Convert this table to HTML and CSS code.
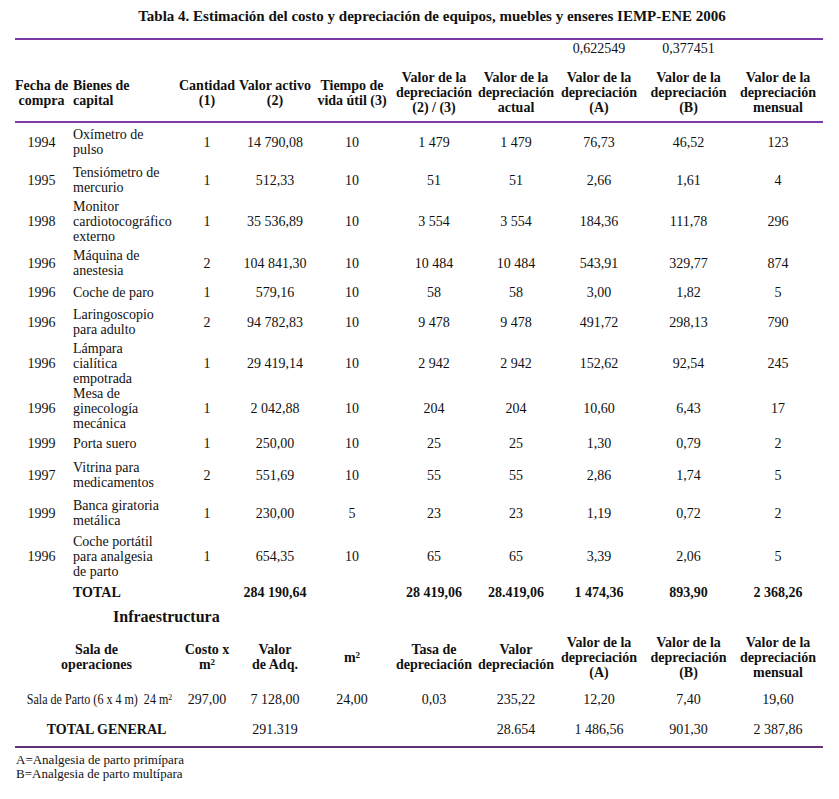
FILE: index.html
```html
<!DOCTYPE html>
<html lang="es">
<head>
<meta charset="utf-8">
<title>Tabla 4</title>
<link rel="stylesheet" href="styles.css">
</head>
<body>
<div class="page">
  <h1 class="title">Tabla 4. Estimación del costo y depreciación de equipos, muebles y enseres IEMP-ENE 2006</h1>
  <table class="tbl">
    <colgroup>
      <col class="c1"><col class="c2"><col class="c3"><col class="c4"><col class="c5">
      <col class="c6"><col class="c7"><col class="c8"><col class="c9"><col class="c10">
    </colgroup>
    <thead>
      <tr class="coef">
        <td colspan="7"></td><td>0,622549</td><td>0,377451</td><td></td>
      </tr>
      <tr class="head">
        <th>Fecha de<br>compra</th>
        <th class="left">Bienes de<br>capital</th>
        <th>Cantidad<br>(1)</th>
        <th>Valor activo<br>(2)</th>
        <th>Tiempo de<br>vida útil (3)</th>
        <th>Valor de la<br>depreciación<br>(2) / (3)</th>
        <th>Valor de la<br>depreciación<br>actual</th>
        <th>Valor de la<br>depreciación<br>(A)</th>
        <th>Valor de la<br>depreciación<br>(B)</th>
        <th>Valor de la<br>depreciación<br>mensual</th>
      </tr>
    </thead>
    <tbody class="body">
      <tr class="r2"><td>1994</td><td class="left">Oxímetro de<br>pulso</td><td>1</td><td>14 790,08</td><td>10</td><td>1 479</td><td>1 479</td><td>76,73</td><td>46,52</td><td>123</td></tr>
      <tr class="r2"><td>1995</td><td class="left">Tensiómetro de<br>mercurio</td><td>1</td><td>512,33</td><td>10</td><td>51</td><td>51</td><td>2,66</td><td>1,61</td><td>4</td></tr>
      <tr class="r3"><td>1998</td><td class="left">Monitor<br>cardiotocográfico<br>externo</td><td>1</td><td>35 536,89</td><td>10</td><td>3 554</td><td>3 554</td><td>184,36</td><td>111,78</td><td>296</td></tr>
      <tr class="r2"><td>1996</td><td class="left">Máquina de<br>anestesia</td><td>2</td><td>104 841,30</td><td>10</td><td>10 484</td><td>10 484</td><td>543,91</td><td>329,77</td><td>874</td></tr>
      <tr class="r1 short"><td>1996</td><td class="left">Coche de paro</td><td>1</td><td>579,16</td><td>10</td><td>58</td><td>58</td><td>3,00</td><td>1,82</td><td>5</td></tr>
      <tr class="r2"><td>1996</td><td class="left">Laringoscopio<br>para adulto</td><td>2</td><td>94 782,83</td><td>10</td><td>9 478</td><td>9 478</td><td>491,72</td><td>298,13</td><td>790</td></tr>
      <tr class="r3"><td>1996</td><td class="left">Lámpara<br>cialítica<br>empotrada</td><td>1</td><td>29 419,14</td><td>10</td><td>2 942</td><td>2 942</td><td>152,62</td><td>92,54</td><td>245</td></tr>
      <tr class="r3"><td>1996</td><td class="left">Mesa de<br>ginecología<br>mecánica</td><td>1</td><td>2 042,88</td><td>10</td><td>204</td><td>204</td><td>10,60</td><td>6,43</td><td>17</td></tr>
      <tr class="r1"><td>1999</td><td class="left">Porta suero</td><td>1</td><td>250,00</td><td>10</td><td>25</td><td>25</td><td>1,30</td><td>0,79</td><td>2</td></tr>
      <tr class="r2"><td>1997</td><td class="left">Vitrina para<br>medicamentos</td><td>2</td><td>551,69</td><td>10</td><td>55</td><td>55</td><td>2,86</td><td>1,74</td><td>5</td></tr>
      <tr class="r2"><td>1999</td><td class="left">Banca giratoria<br>metálica</td><td>1</td><td>230,00</td><td>5</td><td>23</td><td>23</td><td>1,19</td><td>0,72</td><td>2</td></tr>
      <tr class="r3 tall"><td>1996</td><td class="left">Coche portátil<br>para analgesia<br>de parto</td><td>1</td><td>654,35</td><td>10</td><td>65</td><td>65</td><td>3,39</td><td>2,06</td><td>5</td></tr>
      <tr class="r1 total"><td></td><td class="left">TOTAL</td><td></td><td>284 190,64</td><td></td><td>28 419,06</td><td>28.419,06</td><td>1 474,36</td><td>893,90</td><td>2 368,26</td></tr>
      <tr class="infra"><td colspan="4" class="infra-title">Infraestructura</td><td colspan="6"></td></tr>
      <tr class="head2">
        <th colspan="2">Sala de<br>operaciones</th>
        <th>Costo x<br>m<sup>2</sup></th>
        <th>Valor<br>de Adq.</th>
        <th>m<sup>2</sup></th>
        <th>Tasa de<br>depreciación</th>
        <th>Valor<br>depreciación</th>
        <th>Valor de la<br>depreciación<br>(A)</th>
        <th>Valor de la<br>depreciación<br>(B)</th>
        <th>Valor de la<br>depreciación<br>mensual</th>
      </tr>
      <tr class="sala">
        <td colspan="2" class="sala-label"><span class="cond">Sala de Parto (6 x 4 m)&nbsp; 24 m<sup>2</sup></span></td>
        <td>297,00</td><td>7 128,00</td><td>24,00</td><td>0,03</td><td>235,22</td><td>12,20</td><td>7,40</td><td>19,60</td>
      </tr>
      <tr class="gen">
        <td colspan="2" class="gen-label">TOTAL GENERAL</td>
        <td></td><td>291.319</td><td></td><td></td><td>28.654</td><td>1 486,56</td><td>901,30</td><td>2 387,86</td>
      </tr>
    </tbody>
  </table>
  <div class="notes">
    <div>A=Analgesia de parto primípara</div>
    <div>B=Analgesia de parto multípara</div>
  </div>
</div>
</body>
</html>
```

FILE: styles.css
```css
html, body {
  margin: 0;
  background: #ffffff;
}

body {
  font-family: "Liberation Serif", "Times New Roman", serif;
  color: #111111;
}

.page {
  padding: 8px 16px 0 15px;
}

.title {
  margin: 0;
  padding-left: 26px;
  font-size: 15px;
  line-height: 16px;
  font-weight: bold;
  text-align: center;
}

.tbl {
  margin-top: 14px;
  width: 808px;
  table-layout: fixed;
  border-collapse: separate;
  border-spacing: 0;
  font-size: 14px;
}

.c1 { width: 53px; }
.c2 { width: 110px; }
.c3 { width: 58px; }
.c4 { width: 78px; }
.c5 { width: 76px; }
.c6 { width: 88px; }
.c7 { width: 76px; }
.c8 { width: 90px; }
.c9 { width: 89px; }
.c10 { width: 90px; }

.tbl td,
.tbl th {
  padding: 0;
  text-align: center;
  vertical-align: middle;
  white-space: nowrap;
}

.tbl .left {
  text-align: left;
  padding-left: 5px;
}

.coef td {
  border-top: 2px solid #7a3aa8;
  height: 18px;
  line-height: 16px;
}

.tbl .head th {
  height: 57px;
  padding-top: 6px;
  line-height: 15px;
  font-weight: bold;
  border-bottom: 2px solid #7a3aa8;
}

.tbl .head th.left {
  padding-left: 5px;
}

.body td {
  line-height: 15px;
}

.r1 td { height: 25px; }
.r2 td { height: 38px; }
.r3 td { height: 45px; }
.r1.short td { height: 21px; }
.r3.tall td { height: 48px; }

.total td {
  font-weight: bold;
}

.infra td {
  height: 23px;
}

.tbl .infra-title {
  text-align: left;
  padding-left: 98px;
  font-size: 16px;
  font-weight: bold;
  line-height: 18px;
}

.head2 th {
  height: 58px;
  line-height: 15px;
  font-weight: bold;
}

.sala td {
  height: 26px;
}

.tbl .sala-label {
  padding-right: 10px;
}

.cond {
  display: inline-block;
  transform: scaleX(0.86);
  transform-origin: center;
}

.gen td {
  height: 34px;
  border-bottom: 2px solid #653373;
}

.tbl .gen-label {
  font-weight: bold;
  padding-left: 20px;
}

sup {
  font-size: 9px;
  line-height: 0;
  vertical-align: 0.5em;
}

.notes {
  margin-top: 5px;
  padding-left: 1px;
  font-size: 13px;
  line-height: 14px;
}
```
